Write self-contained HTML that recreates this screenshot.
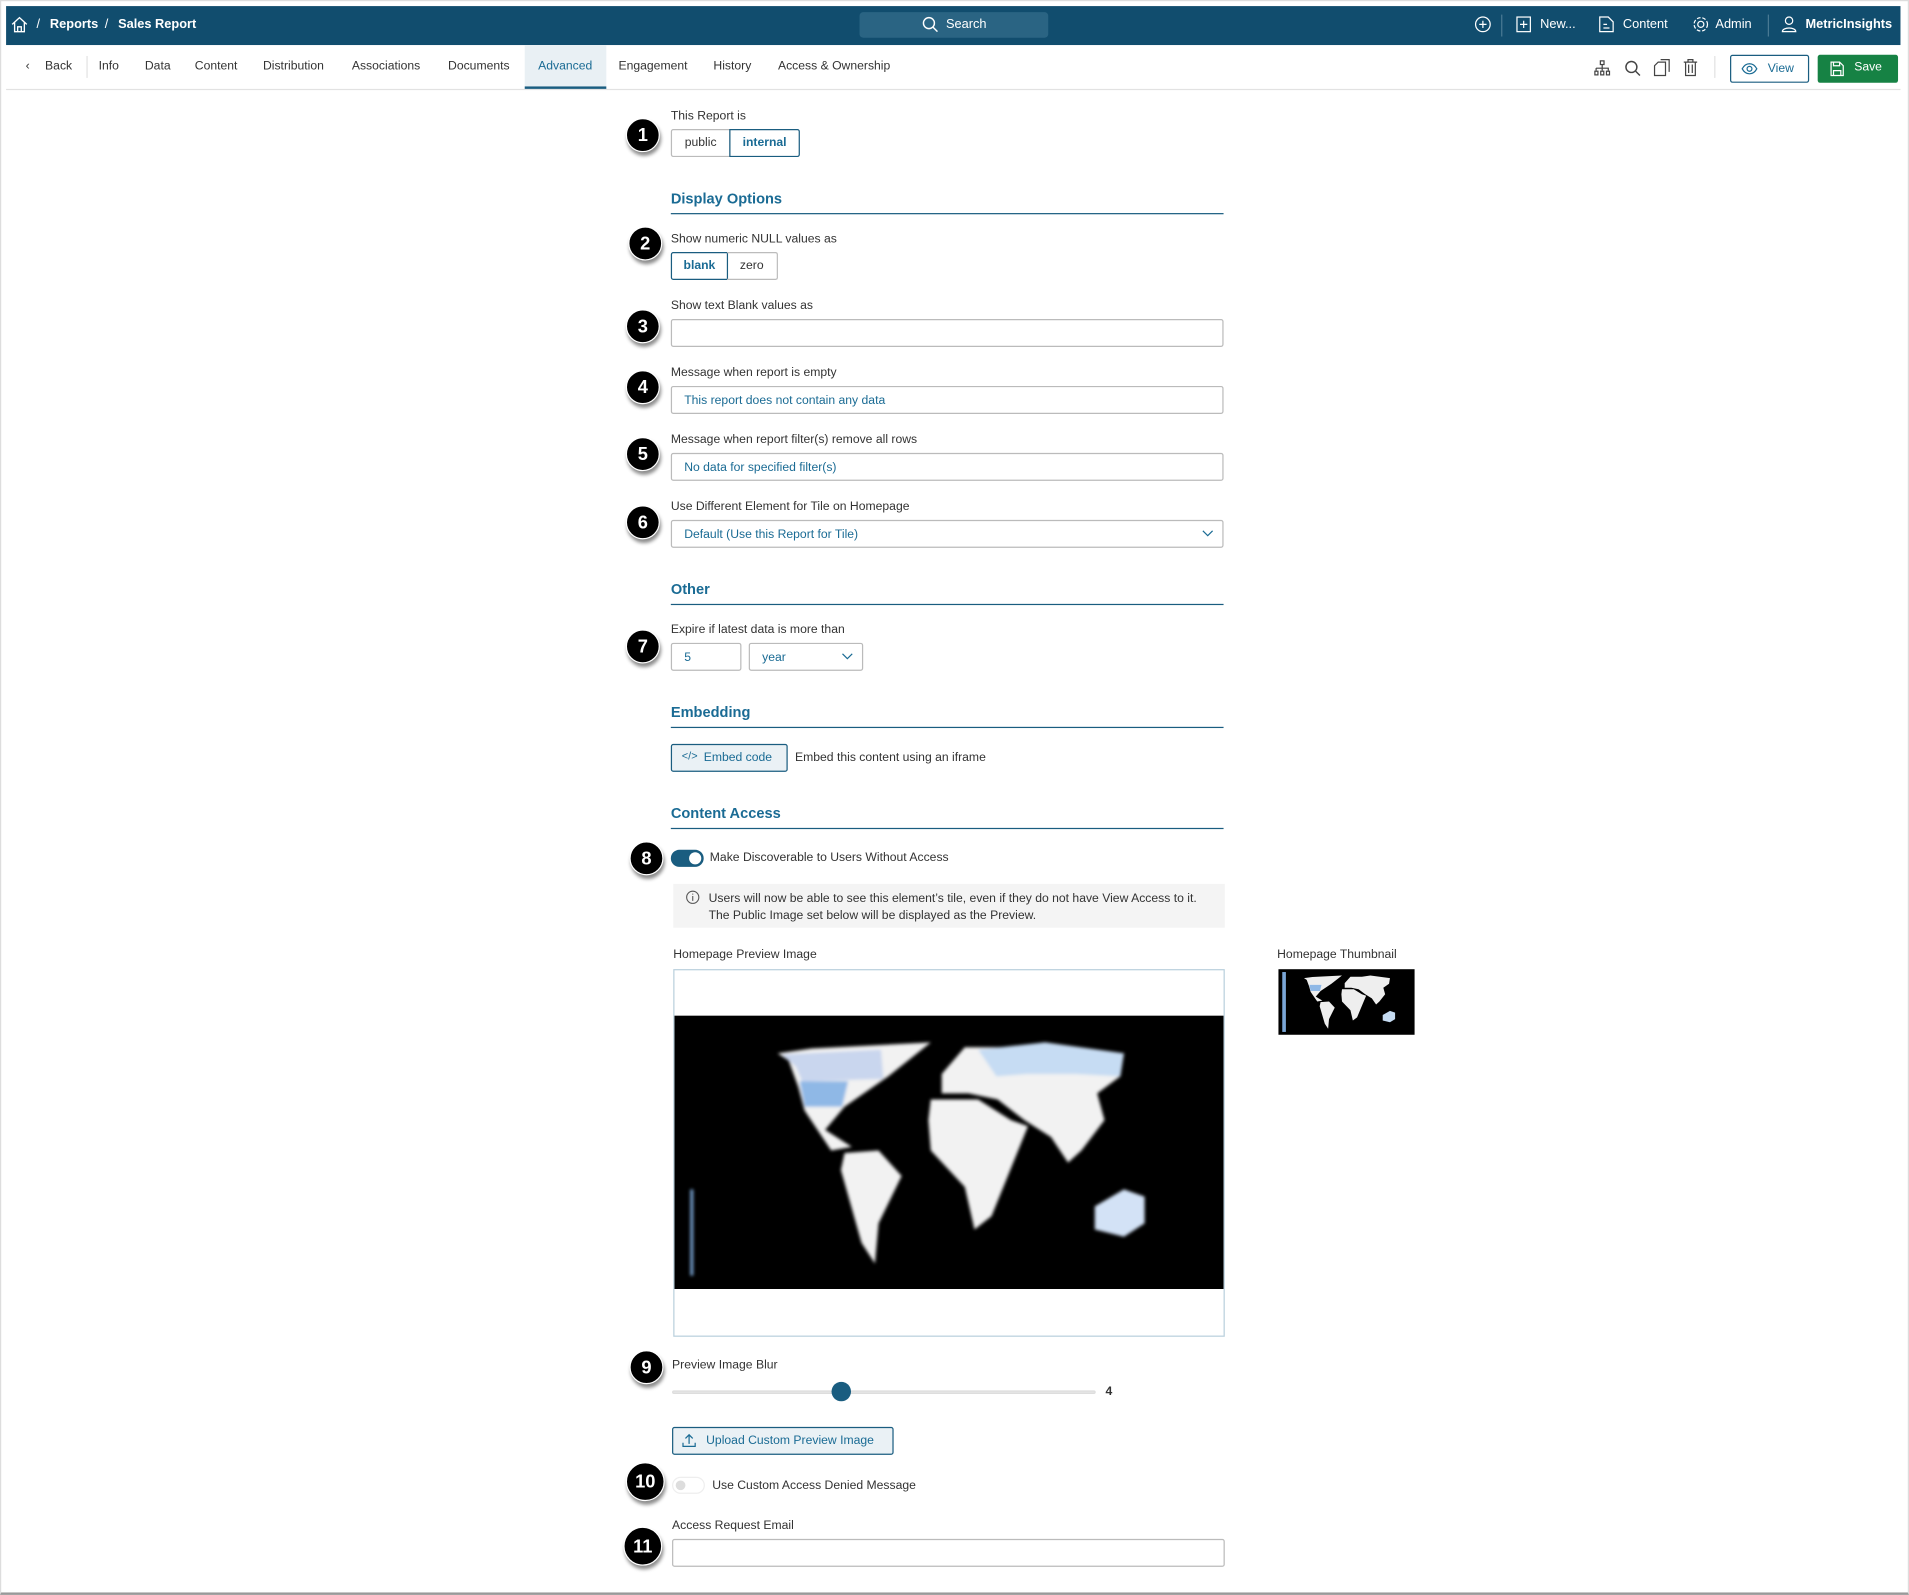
<!DOCTYPE html>
<html><head><meta charset="utf-8"><style>
*{box-sizing:border-box;margin:0;padding:0}
html,body{width:1909px;height:1595px;overflow:hidden;background:#fff}
#w{position:absolute;left:0;top:0;width:1568px;height:1310px;transform:scale(1.21747);transform-origin:0 0;font-family:"Liberation Sans",sans-serif;font-size:10px;color:#333}
.a{position:absolute}
.top{left:5px;top:5px;width:1556px;height:32px;background:#114d6e;color:#fff;font-size:10.5px}
.top .a{top:9px}
.lbl{position:absolute;font-size:10px;color:#333;left:551px}
.inp{position:absolute;left:551px;width:454px;height:23px;border:1px solid #bbb;border-radius:2px;color:#1a6b94;padding:6px 10px;font-size:10px}
.h{position:absolute;left:551px;width:454px;font-size:12px;font-weight:bold;color:#1a6b94;border-bottom:1.5px solid #1a5d80;padding-bottom:5px}
.n{position:absolute;width:28px;height:28px;border-radius:50%;background:#000;color:#fff;font-weight:bold;font-size:15px;text-align:center;line-height:28px;box-shadow:1px 3px 3px rgba(0,0,0,.45);border:1.5px solid #fff}
.tab{position:absolute;top:49px;font-size:10px;color:#333}
</style></head><body><div id="w">
<div class="a" style="left:0;top:0;width:1568px;height:1310px;border:1px solid #ddd;border-bottom:2px solid #999"></div>
<div class="a top">
<svg class="a" style="left:4px;top:8px" width="14" height="14" viewBox="0 0 14 14" fill="none" stroke="#fff" stroke-width="1.1"><path d="M1 7 7 1.5 13 7M3 5.5V13h8V5.5M5.5 13V9h3v4"/></svg>
<span class="a" style="left:25px">/</span><span class="a" style="left:36px;font-weight:bold">Reports</span><span class="a" style="left:81px">/</span><span class="a" style="left:92px;font-weight:bold">Sales Report</span>
<div class="a" style="left:701px;top:5px;width:155px;height:21px;background:#2a6483;border-radius:3px"></div>
<svg class="a" style="left:752px;top:8px" width="14" height="14" fill="none" stroke="#fff" stroke-width="1.2"><circle cx="6" cy="6" r="4.5"/><path d="M9.5 9.5 13 13"/></svg>
<span class="a" style="left:772px">Search</span>
<svg class="a" style="left:1206px;top:8px" width="14" height="14" fill="none" stroke="#fff"><circle cx="7" cy="7" r="6"/><path d="M7 4v6M4 7h6"/></svg>
<div class="a" style="left:1228px;top:7px;width:1px;height:18px;background:#4a7a94"></div>
<svg class="a" style="left:1240px;top:8px" width="13" height="14" fill="none" stroke="#fff"><rect x="1" y="1" width="11" height="12"/><path d="M6.5 4v6M3.5 7h6"/></svg>
<span class="a" style="left:1260px">New...</span>
<svg class="a" style="left:1308px;top:8px" width="13" height="14" fill="none" stroke="#fff"><path d="M1 1h7l4 4v8H1zM4 7h3M4 10h5"/></svg>
<span class="a" style="left:1328px">Content</span>
<svg class="a" style="left:1385px;top:8px" width="14" height="14" fill="none" stroke="#fff"><circle cx="7" cy="7" r="2.5"/><circle cx="7" cy="7" r="5.5" stroke-dasharray="3 1.5"/></svg>
<span class="a" style="left:1404px">Admin</span>
<div class="a" style="left:1447px;top:7px;width:1px;height:18px;background:#4a7a94"></div>
<svg class="a" style="left:1458px;top:8px" width="13" height="14" fill="none" stroke="#fff"><circle cx="6.5" cy="4" r="3"/><path d="M1 13c0-4 11-4 11 0z"/></svg>
<span class="a" style="left:1478px;font-weight:bold">MetricInsights</span>
</div>
<div class="a" style="left:5px;top:73px;width:1556px;height:1px;background:#e2e2e2"></div>
<div class="a" style="left:431px;top:37px;width:67px;height:36px;background:#e9f0f4;border-bottom:2px solid #1a5d80"></div>
<span class="tab" style="left:21px">‹</span><span class="tab" style="left:37px">Back</span>
<div class="a" style="left:71px;top:46px;width:1px;height:18px;background:#e2e2e2"></div>
<span class="tab" style="left:81px">Info</span><span class="tab" style="left:119px">Data</span><span class="tab" style="left:160px">Content</span><span class="tab" style="left:216px">Distribution</span><span class="tab" style="left:289px">Associations</span><span class="tab" style="left:368px">Documents</span><span class="tab" style="left:442px;color:#1a6b94">Advanced</span><span class="tab" style="left:508px">Engagement</span><span class="tab" style="left:586px">History</span><span class="tab" style="left:639px">Access &amp; Ownership</span>
<svg class="a" style="left:1309px;top:49px" width="14" height="14" fill="none" stroke="#444"><rect x="5.5" y="1" width="3" height="3"/><path d="M7 4v3M2 7h10v2M2 7v2M7 7v2"/><rect x="1" y="9.5" width="2.5" height="3"/><rect x="5.8" y="9.5" width="2.5" height="3"/><rect x="10.5" y="9.5" width="2.5" height="3"/></svg>
<svg class="a" style="left:1334px;top:49px" width="14" height="14" fill="none" stroke="#444" stroke-width="1.2"><circle cx="6" cy="6" r="4.5"/><path d="M9.5 9.5 13 13"/></svg>
<svg class="a" style="left:1358px;top:48px" width="14" height="15" fill="none" stroke="#444"><path d="M4 3h6v11H1V6zM6 1h7v10"/></svg>
<svg class="a" style="left:1382px;top:48px" width="13" height="15" fill="none" stroke="#444"><path d="M1 3h11M4.5 3V1h4v2M2.5 3v11h8V3M5 5v7M8 5v7"/></svg>
<div class="a" style="left:1408px;top:46px;width:1px;height:18px;background:#e2e2e2"></div>
<div class="a" style="left:1421px;top:45px;width:65px;height:23px;border:1px solid #1a5d80;border-radius:2px;color:#1a6b94;font-size:10px;padding:5px 0 0 30px">View</div>
<svg class="a" style="left:1430px;top:51px" width="14" height="11" fill="none" stroke="#1a6b94"><path d="M1 5.5C4 0 10 0 13 5.5 10 11 4 11 1 5.5z"/><circle cx="7" cy="5.5" r="2"/></svg>
<div class="a" style="left:1493px;top:45px;width:66px;height:23px;background:#168244;border-radius:2px;color:#fff;font-size:10px;padding:5px 0 0 30px">Save</div>
<svg class="a" style="left:1503px;top:50px" width="12" height="13" fill="none" stroke="#fff"><path d="M1 1h7l3 3v8H1zM3 1v3h5V1M3 12V8h6v4"/></svg>

<div class="lbl" style="top:90px">This Report is</div>
<div class="a" style="left:551px;top:106px;width:49px;height:23px;border:1px solid #bbb;border-radius:2px 0 0 2px;text-align:center;line-height:21px">public</div>
<div class="a" style="left:599px;top:106px;width:58px;height:23px;border:1px solid #1a5d80;border-radius:0 2px 2px 0;text-align:center;line-height:21px;color:#1a6b94;font-weight:bold">internal</div>
<div class="n" style="left:514px;top:97px">1</div>

<div class="h" style="top:156px">Display Options</div>
<div class="lbl" style="top:191px">Show numeric NULL values as</div>
<div class="a" style="left:551px;top:207px;width:47px;height:23px;border:1px solid #1a5d80;border-radius:2px 0 0 2px;text-align:center;line-height:21px;color:#1a6b94;font-weight:bold">blank</div>
<div class="a" style="left:597px;top:207px;width:42px;height:23px;border:1px solid #bbb;border-left:none;border-radius:0 2px 2px 0;text-align:center;line-height:21px">zero</div>
<div class="n" style="left:516px;top:186px">2</div>

<div class="lbl" style="top:246px">Show text Blank values as</div>
<div class="inp" style="top:262px"></div>
<div class="n" style="left:514px;top:254px">3</div>

<div class="lbl" style="top:301px">Message when report is empty</div>
<div class="inp" style="top:317px">This report does not contain any data</div>
<div class="n" style="left:514px;top:304px">4</div>

<div class="lbl" style="top:356px">Message when report filter(s) remove all rows</div>
<div class="inp" style="top:372px">No data for specified filter(s)</div>
<div class="n" style="left:514px;top:359px">5</div>

<div class="lbl" style="top:411px">Use Different Element for Tile on Homepage</div>
<div class="inp" style="top:427px">Default (Use this Report for Tile)</div>
<svg class="a" style="left:987px;top:434px" width="10" height="8" fill="none" stroke="#1a6b94"><path d="M1 2l4 4 4-4"/></svg>
<div class="n" style="left:514px;top:415px">6</div>

<div class="h" style="top:477px">Other</div>
<div class="lbl" style="top:512px">Expire if latest data is more than</div>
<div class="inp" style="top:528px;width:58px">5</div>
<div class="inp" style="top:528px;left:615px;width:94px">year</div>
<svg class="a" style="left:691px;top:535px" width="10" height="8" fill="none" stroke="#1a6b94"><path d="M1 2l4 4 4-4"/></svg>
<div class="n" style="left:514px;top:517px">7</div>

<div class="h" style="top:578px">Embedding</div>
<div class="a" style="left:551px;top:611px;width:96px;height:23px;border:1px solid #1a5d80;border-radius:2px;background:#eaf1f5;color:#1a6b94;padding:5px 0 0 26px">Embed code</div>
<span class="a" style="left:560px;top:616px;color:#1a6b94;font-size:9px">&lt;/&gt;</span>
<div class="lbl" style="left:653px;top:617px">Embed this content using an iframe</div>

<div class="h" style="top:661px">Content Access</div>
<div class="a" style="left:551px;top:698px;width:27px;height:14px;border-radius:7px;background:#1a5d80"></div>
<div class="a" style="left:566px;top:700px;width:10px;height:10px;border-radius:50%;background:#fff"></div>
<div class="lbl" style="left:583px;top:699px">Make Discoverable to Users Without Access</div>
<div class="n" style="left:517px;top:691px">8</div>
<div class="a" style="left:553px;top:726px;width:453px;height:36px;background:#f4f4f4"></div>
<svg class="a" style="left:563px;top:731px" width="12" height="12" fill="none" stroke="#555" stroke-width=".9"><circle cx="6" cy="6" r="5"/><path d="M6 5v4M6 3v.8"/></svg>
<div class="a" style="left:582px;top:732px;font-size:10px;line-height:14px;color:#333;width:420px">Users will now be able to see this element’s tile, even if they do not have View Access to it. The Public Image set below will be displayed as the Preview.</div>

<div class="lbl" style="left:553px;top:779px">Homepage Preview Image</div>
<div class="lbl" style="left:1049px;top:779px">Homepage Thumbnail</div>
<div class="a" style="left:553px;top:796px;width:453px;height:302px;border:1px solid #b9cfdc"></div>
<svg class="a" style="left:554px;top:834px" width="451" height="225" viewBox="0 0 452 225">
<defs><filter id="b"><feGaussianBlur stdDeviation="1.3"/></filter></defs>
<rect width="452" height="225" fill="#000"/>
<g filter="url(#b)">
<path d="M85 31 113 27 211 22 176 50 140 75 124 94 146 108 129 111 107 78 102 59 94 37Z" fill="#f2f2f2"/>
<path d="M88 32 170 28 172 52 105 54 100 42Z" fill="#c9d6ee"/>
<path d="M103 54 143 54 138 75 107 75Z" fill="#8fb8e6"/>
<path d="M140 113 168 111 187 132 168 171 165 204 154 187 137 127Z" fill="#f2f2f2"/>
<path d="M211 69 250 69 277 86 291 91 272 138 261 165 247 176 239 141 211 111 209 86Z" fill="#f2f2f2"/>
<path d="M220 48 239 26 277 26 305 22 370 31 367 50 348 64 354 86 335 111 324 121 310 100 288 86 266 69 242 64 220 64Z" fill="#f2f2f2"/>
<path d="M250 28 305 22 370 31 367 50 330 48 290 48 265 50Z" fill="#c6dcf3"/>
<path d="M346 157 370 143 387 149 387 171 370 182 346 176Z" fill="#d3e2f6"/>
<rect x="13" y="143" width="2.5" height="71" fill="#7aa6d6"/>
</g></svg>
<svg class="a" style="left:1050px;top:796px" width="112" height="54" viewBox="0 0 452 225" preserveAspectRatio="none">
<rect width="452" height="225" fill="#000"/>
<g filter="url(#b)">
<path d="M85 31 113 27 211 22 176 50 140 75 124 94 146 108 129 111 107 78 102 59 94 37Z" fill="#eee"/>
<path d="M103 54 143 54 138 75 107 75Z" fill="#8fb8e6"/>
<path d="M140 113 168 111 187 132 168 171 165 204 154 187 137 127Z" fill="#eee"/>
<path d="M211 69 250 69 277 86 291 91 272 138 261 165 247 176 239 141 211 111 209 86Z" fill="#eee"/>
<path d="M220 48 239 26 277 26 305 22 370 31 367 50 348 64 354 86 335 111 324 121 310 100 288 86 266 69 242 64 220 64Z" fill="#eee"/>
<path d="M346 157 370 143 387 149 387 171 370 182 346 176Z" fill="#c6dcf3"/>
<rect x="13" y="10" width="12" height="205" fill="#7aa6d6"/>
</g></svg>

<div class="lbl" style="left:552px;top:1116px">Preview Image Blur</div>
<div class="n" style="left:517px;top:1109px">9</div>
<div class="a" style="left:552px;top:1142px;width:348px;height:3px;border-radius:2px;background:#e6e6e6;border:1px solid #ddd"></div>
<div class="a" style="left:683px;top:1135px;width:16px;height:16px;border-radius:50%;background:#1a5d80"></div>
<div class="a" style="left:908px;top:1138px;font-size:10px;font-weight:bold">4</div>

<div class="a" style="left:552px;top:1172px;width:182px;height:23px;border:1px solid #1a5d80;border-radius:2px;background:#eaf1f5;color:#1a6b94;padding:5px 0 0 27px">Upload Custom Preview Image</div>
<svg class="a" style="left:560px;top:1177px" width="12" height="12" fill="none" stroke="#1a6b94"><path d="M6 9V1.5M3 4.5l3-3 3 3M1 8v3h10V8"/></svg>

<div class="a" style="left:552px;top:1213px;width:27px;height:14px;border-radius:7px;background:#fff;border:1px solid #eee"></div>
<div class="a" style="left:555px;top:1216px;width:8px;height:8px;border-radius:50%;background:#ddd"></div>
<div class="lbl" style="left:585px;top:1215px">Use Custom Access Denied Message</div>
<div class="n" style="left:514px;top:1201px;width:32px;height:32px;line-height:32px">10</div>

<div class="lbl" style="left:552px;top:1248px">Access Request Email</div>
<div class="inp" style="left:552px;top:1264px"></div>
<div class="n" style="left:512px;top:1254px;width:32px;height:32px;line-height:32px">11</div>
</div></body></html>
